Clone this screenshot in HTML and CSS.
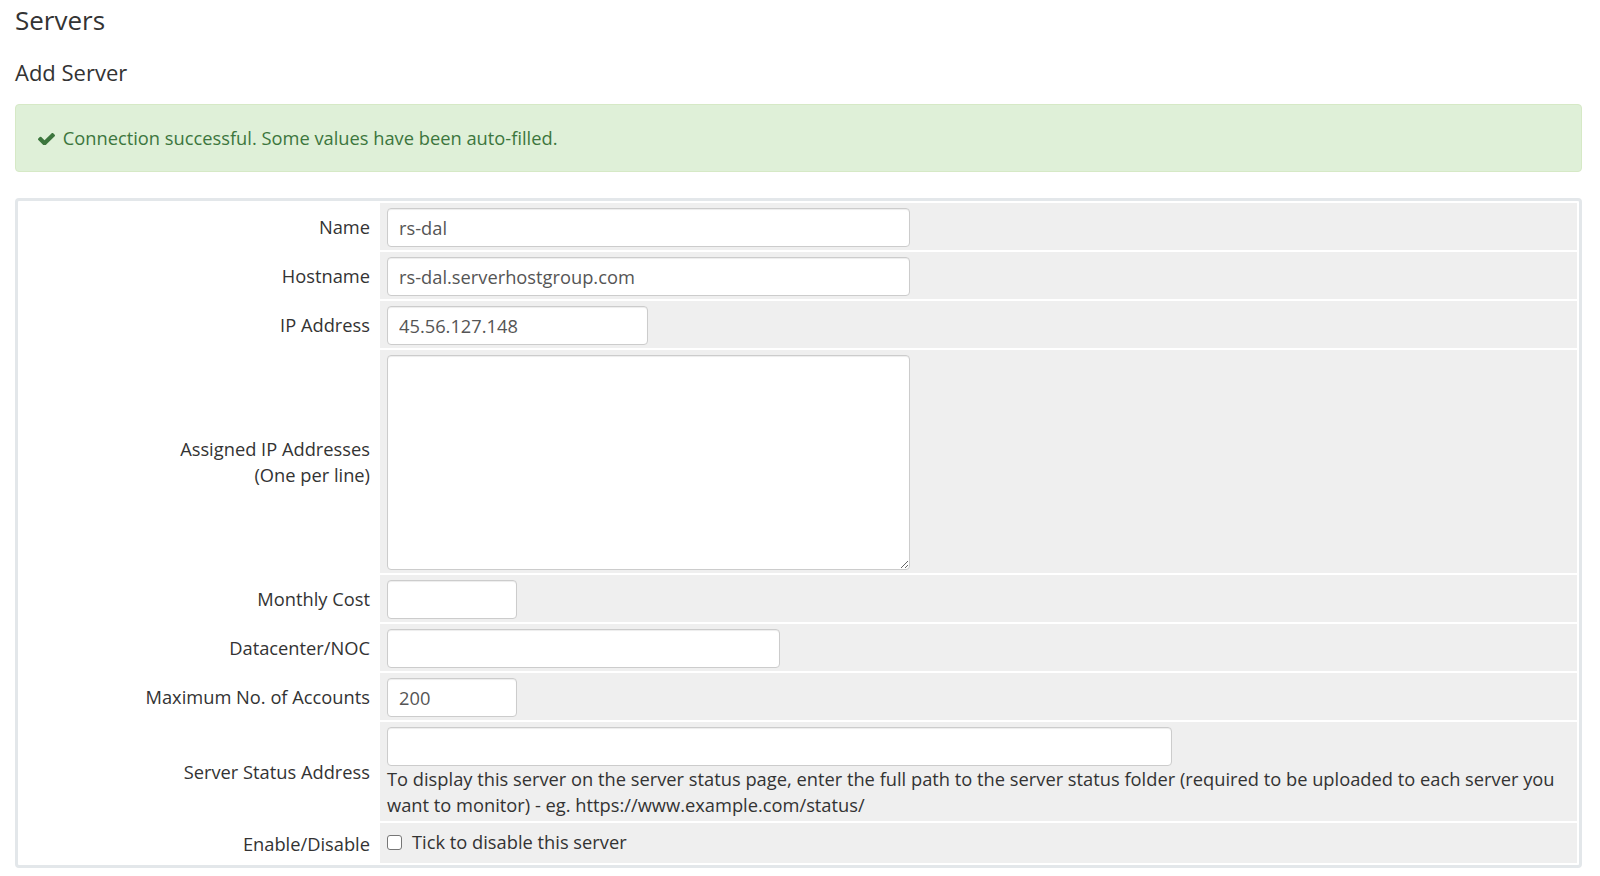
FILE: index.html
```html
<!DOCTYPE html>
<html lang="en">
<head>
    <meta charset="UTF-8">
    <meta name="viewport" content="width=device-width, initial-scale=1.0">
    <title>Servers - Add Server</title>
    <link rel="stylesheet" href="styles.css">
</head>
<body>
    <div class="content">
        <h1>Servers</h1>
        <h2>Add Server</h2>

        <div class="alert alert-success">
            <svg class="icon-check" viewBox="121 384 1550 1024"><path d="M1671 566q0 40-28 68l-724 724-136 136q-28 28-68 28t-68-28l-136-136-362-362q-28-28-28-68t28-68l136-136q28-28 68-28t68 28l294 295 656-657q28-28 68-28t68 28l136 136q28 28 28 68z"/></svg>
            Connection successful. Some values have been auto-filled.
        </div>

        <table class="form">
            <tr>
                <td class="fieldlabel">Name</td>
                <td class="fieldarea"><input type="text" class="input-400" value="rs-dal"></td>
            </tr>
            <tr>
                <td class="fieldlabel">Hostname</td>
                <td class="fieldarea"><input type="text" class="input-400" value="rs-dal.serverhostgroup.com"></td>
            </tr>
            <tr>
                <td class="fieldlabel">IP Address</td>
                <td class="fieldarea"><input type="text" class="input-200" value="45.56.127.148"></td>
            </tr>
            <tr>
                <td class="fieldlabel">Assigned IP Addresses<br>(One per line)</td>
                <td class="fieldarea"><textarea class="input-400"></textarea></td>
            </tr>
            <tr>
                <td class="fieldlabel">Monthly Cost</td>
                <td class="fieldarea"><input type="text" class="input-100" value=""></td>
            </tr>
            <tr>
                <td class="fieldlabel">Datacenter/NOC</td>
                <td class="fieldarea"><input type="text" class="input-300" value=""></td>
            </tr>
            <tr>
                <td class="fieldlabel">Maximum No. of Accounts</td>
                <td class="fieldarea"><input type="text" class="input-100" value="200"></td>
            </tr>
            <tr>
                <td class="fieldlabel">Server Status Address</td>
                <td class="fieldarea">
                    <input type="text" class="input-600" value="">
                    <div class="help">To display this server on the server status page, enter the full path to the server status folder (required to be uploaded to each server you want to monitor) - eg. https://www.example.com/status/</div>
                </td>
            </tr>
            <tr>
                <td class="fieldlabel">Enable/Disable</td>
                <td class="fieldarea check-row"><label class="checkbox-inline"><input type="checkbox"> Tick to disable this server</label></td>
            </tr>
        </table>
    </div>
</body>
</html>
```

FILE: styles.css
```css
body {
    margin: 0;
    padding: 0;
    background-color: #fff;
    font-family: "Open Sans", "Liberation Sans", sans-serif;
    font-size: 18.3px;
    line-height: 26px;
    color: #333;
}
.content {
    padding: 6px 18px 0 15px;
}
h1 {
    margin: 0 0 25px 0;
    font-size: 26px;
    font-weight: 400;
    line-height: 1.1;
    color: #333;
}
h2 {
    margin: 0 0 20px 0;
    font-size: 22px;
    font-weight: 400;
    line-height: 1.1;
    color: #333;
}
.alert {
    padding: 20px 22px;
    border: 1px solid #d6e9c6;
    border-radius: 4px;
    margin-bottom: 26px;
}
.alert-success {
    background-color: #dff0d8;
    color: #3c763d;
}
.icon-check {
    width: 17px;
    height: 12px;
    fill: #3c763d;
    margin-right: 3px;
}
table.form {
    width: 100%;
    border: 3px solid #e3e7ea;
    border-radius: 4px;
    border-collapse: separate;
    border-spacing: 2px;
}
.fieldlabel {
    width: 350px;
    padding: 2px 8px 0 0;
    text-align: right;
    vertical-align: middle;
    background-color: #fff;
}
.fieldarea {
    padding: 5px 7px 3px 7px;
    background-color: #efefef;
    vertical-align: top;
}
.fieldarea.check-row {
    padding: 6px 7px 8px 7px;
}
input[type=text], textarea {
    display: block;
    box-sizing: border-box;
    height: 39px;
    margin: 0;
    padding: 0 11px;
    font-family: "Open Sans", "Liberation Sans", sans-serif;
    font-size: 18.3px;
    color: #555;
    background-color: #fff;
    border: 1px solid #ccc;
    border-radius: 4px;
    box-shadow: inset 0 1px 1px rgba(0, 0, 0, 0.075);
    outline: none;
}
textarea {
    height: 215px;
    padding: 6px 11px;
    resize: vertical;
}
.input-100 { width: 130px; }
.input-200 { width: 261px; }
.input-300 { width: 393px; }
.input-400 { width: 523px; }
.input-600 { width: 785px; }
.help {
    color: #333;
}
.checkbox-inline {
    display: flex;
    align-items: center;
}
input[type=checkbox] {
    appearance: none;
    -webkit-appearance: none;
    width: 15px;
    height: 15px;
    margin: 1px 10px 0 0;
    border: 1px solid #767676;
    border-radius: 3px;
    background-color: #fff;
}
```
